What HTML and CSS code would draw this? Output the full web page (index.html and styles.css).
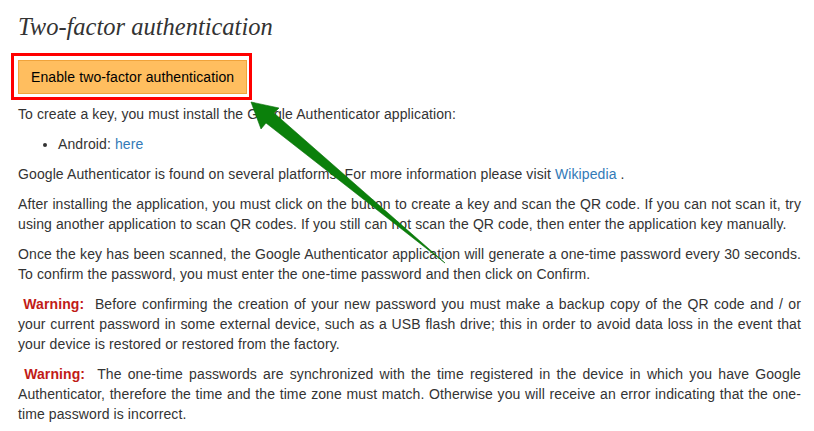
FILE: index.html
```html
<!DOCTYPE html>
<html lang="en">
<head>
    <meta charset="UTF-8">
    <meta name="viewport" content="width=device-width, initial-scale=1.0">
    <title>Two-factor authentication</title>
    <link rel="stylesheet" href="styles.css">
</head>
<body>
    <div class="page">
        <h1>Two-factor authentication</h1>

        <div class="highlight">
            <button type="button" class="btn-enable">Enable two-factor authentication</button>
        </div>

        <p>To create a key, you must install the Google Authenticator application:</p>
        <ul>
            <li>Android: <a href="#">here</a></li>
        </ul>
        <p>Google Authenticator is found on several platforms. For more information please visit <a href="#">Wikipedia</a> .</p>
        <p>After installing the application, you must click on the button to create a key and scan the QR code. If you can not scan it, try using another application to scan QR codes. If you still can not scan the QR code, then enter the application key manually.</p>
        <p>Once the key has been scanned, the Google Authenticator application will generate a one-time password every 30 seconds. To confirm the password, you must enter the one-time password and then click on Confirm.</p>
        <p>&nbsp;<strong class="warning">Warning:</strong>&nbsp; Before confirming the creation of your new password you must make a backup copy of the QR code and / or your current password in some external device, such as a USB flash drive; this in order to avoid data loss in the event that your device is restored or restored from the factory.</p>
        <p>&nbsp;<strong class="warning">Warning:</strong>&nbsp; The one-time passwords are synchronized with the time registered in the device in which you have Google Authenticator, therefore the time and the time zone must match. Otherwise you will receive an error indicating that the one-time password is incorrect.</p>
    </div>

    <!-- annotation arrow pointing at the button -->
    <svg class="arrow" width="814" height="431" viewBox="0 0 814 431">
        <polygon points="251,102 279,108 274,113 445,263 266,123 261,129" fill="#0b800b" stroke="#0a6e0a" stroke-width="0.6"/>
    </svg>
</body>
</html>
```

FILE: styles.css
```css
body {
    font-family: "Liberation Sans", Arial, sans-serif;
    font-size: 14px;
    letter-spacing: 0.1px;
    line-height: 20px;
    color: #333;
    margin: 0;
    padding: 0;
    background-color: #fff;
}
.page {
    width: 783px;
    padding: 12px 0 0 18px;
}
h1 {
    font-family: "Liberation Serif", "Times New Roman", serif;
    font-style: italic;
    font-weight: normal;
    font-size: 24.5px;
    letter-spacing: 0;
    line-height: 30px;
    margin: 0 0 11px;
    color: #333;
}
.highlight {
    display: inline-block;
    border: 3px solid #f00;
    padding: 4px 2px 3px 4px;
    margin-left: -7px;
    margin-bottom: 4px;
    line-height: 0;
}
.btn-enable {
    font-family: "Liberation Sans", Arial, sans-serif;
    font-size: 14px;
    letter-spacing: 0.1px;
    line-height: 20px;
    height: 34px;
    padding: 6px 12px;
    color: #000;
    background-color: #ffbe5f;
    border: 1px solid #f0a33a;
    border-radius: 0;
    cursor: pointer;
}
p {
    margin: 0 0 10px;
    text-align: justify;
}
ul {
    margin: 0 0 10px;
    padding-left: 40px;
}
a {
    color: #337ab7;
    text-decoration: none;
}
.warning {
    color: #c11b17;
}
.arrow {
    position: absolute;
    top: 0;
    left: 0;
    pointer-events: none;
}
```
